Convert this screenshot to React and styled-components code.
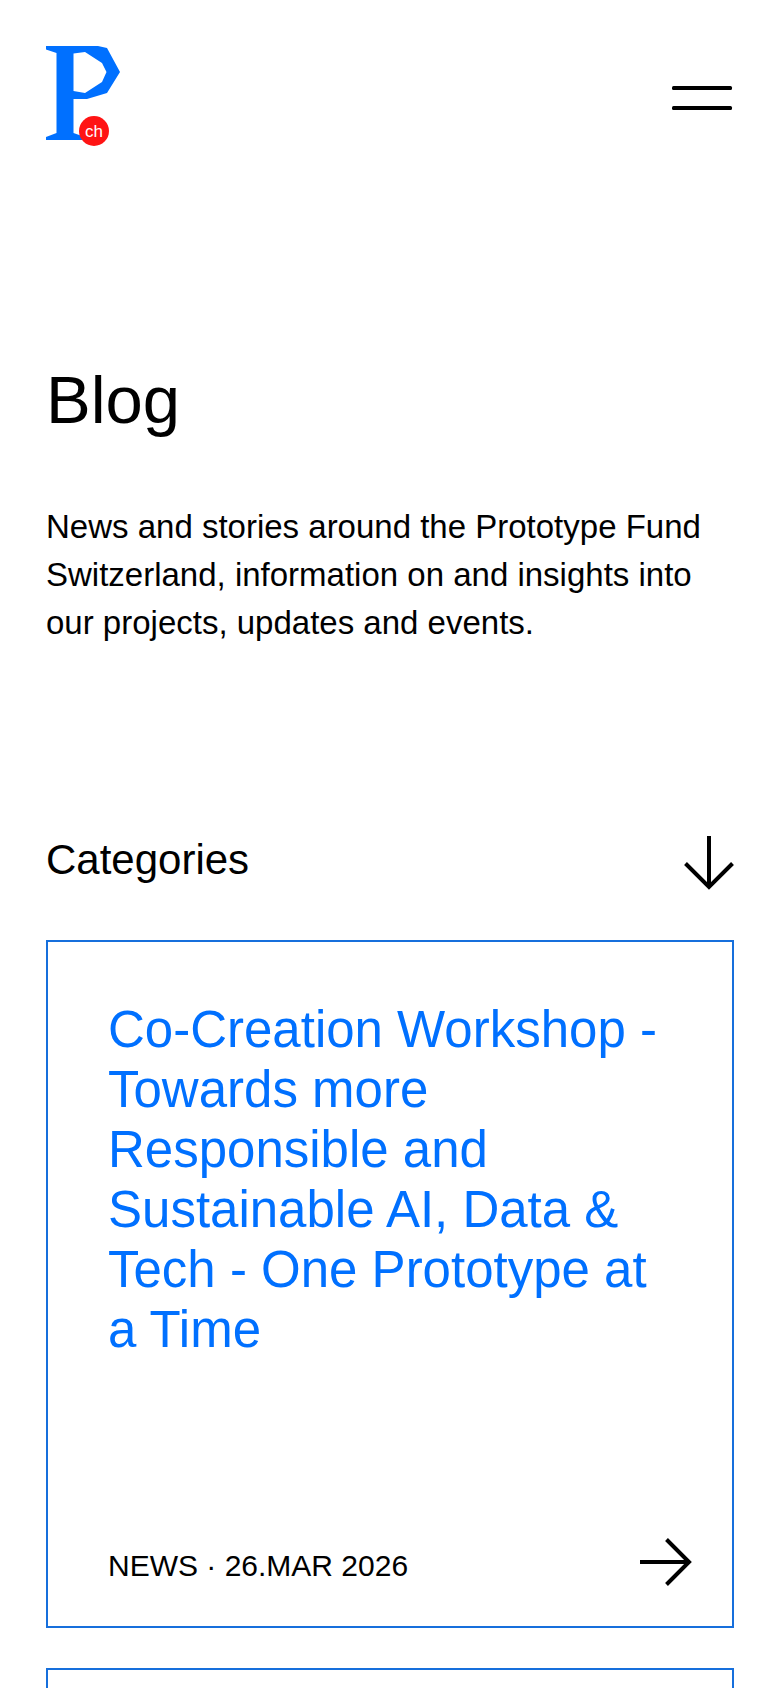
import React from 'react';
import styled, { createGlobalStyle } from 'styled-components';

const posts = [
  {
    title:
      'Co-Creation Workshop - Towards more Responsible and Sustainable AI, Data & Tech - One Prototype at a Time',
    meta: 'NEWS · 26.MAR 2026',
  },
  { title: '', meta: '' },
];

const App = () => {
  return (
    <>
      <GlobalStyle />
      <Page>
        <Header>
          <LogoLink href="/" aria-label="Prototype Fund Switzerland">
            <Logo />
          </LogoLink>
          <MenuButton type="button" aria-label="Menu">
            <svg width="62" height="24" viewBox="0 0 62 24" aria-hidden="true">
              <rect x="0" y="0" width="60" height="4" rx="1.5" />
              <rect x="0" y="20" width="60" height="4" rx="1.5" />
            </svg>
          </MenuButton>
        </Header>
        <main>
          <Title>Blog</Title>
          <Intro>
            News and stories around the Prototype Fund Switzerland, information on and insights
            into our projects, updates and events.
          </Intro>
          <CategoriesButton type="button" aria-expanded="false">
            Categories
            <ArrowDown />
          </CategoriesButton>
          <PostList>
            {posts.map((post, index) => (
              <PostCard key={index} href="/blog">
                <PostTitle>{post.title}</PostTitle>
                <PostFooter>
                  <PostMeta>{post.meta}</PostMeta>
                  <ArrowRight />
                </PostFooter>
              </PostCard>
            ))}
          </PostList>
        </main>
      </Page>
    </>
  );
};

const Logo = () => (
  <svg width="76" height="104" viewBox="0 0 76 104" aria-hidden="true">
    <path
      fill="#0070ff"
      fillRule="evenodd"
      d="M0 0H52L61 2L74 26L61 47L41 53H27.5V87L36 90V94H0V91L10.5 87V7L0 3.5Z
         M27.5 7.5L39 6L56 17L60.5 26L56 36L39 47L27.5 45Z"
    />
    <circle cx="48" cy="85" r="15" fill="#ff1414" />
    <LogoText x="48" y="91" textAnchor="middle">
      ch
    </LogoText>
  </svg>
);

const ArrowDown = () => (
  <svg width="50" height="54" viewBox="0 0 50 54" fill="none" stroke="#000" strokeWidth="4" aria-hidden="true">
    <path d="M25 0V51M1.5 27.5L25 51L48.5 27.5" />
  </svg>
);

const ArrowRight = () => (
  <svg width="52" height="48" viewBox="0 0 52 48" fill="none" stroke="#000" strokeWidth="4" aria-hidden="true">
    <path d="M0 24H49M26.5 1.5L49 24L26.5 46.5" />
  </svg>
);

const GlobalStyle = createGlobalStyle`
  * {
    box-sizing: border-box;
  }

  body {
    margin: 0;
    background: #fff;
    color: #000;
    font-family: 'Liberation Sans', Arial, sans-serif;
    overflow-x: hidden;
  }
`;

const Page = styled.div`
  padding: 46px;
`;

const Header = styled.header`
  display: flex;
  align-items: center;
  justify-content: space-between;
`;

const LogoLink = styled.a`
  display: flex;
`;

const LogoText = styled.text`
  fill: #fff;
  font-size: 17px;
`;

const MenuButton = styled.button`
  display: flex;
  padding: 0;
  border: 0;
  background: none;
  cursor: pointer;
`;

const Title = styled.h1`
  margin: 210px 0 0;
  font-size: 67px;
  line-height: 80px;
  font-weight: 400;
`;

const Intro = styled.p`
  margin: 63px 0 0;
  font-size: 33px;
  line-height: 48px;
`;

const CategoriesButton = styled.button`
  display: flex;
  align-items: flex-start;
  justify-content: space-between;
  width: 100%;
  margin-top: 189px;
  padding: 0;
  border: 0;
  background: none;
  color: inherit;
  font-family: inherit;
  font-size: 42px;
  line-height: 48px;
  cursor: pointer;
`;

const PostList = styled.div`
  display: flex;
  flex-direction: column;
  gap: 40px;
  margin-top: 50px;
`;

const PostCard = styled.a`
  display: flex;
  flex-direction: column;
  justify-content: space-between;
  aspect-ratio: 1;
  padding: 58px 40px 40px 60px;
  border: 2px solid #166fdc;
  color: inherit;
  text-decoration: none;
`;

const PostTitle = styled.h2`
  margin: 0;
  padding-right: 20px;
  color: #0070ff;
  font-size: 51px;
  line-height: 60px;
  font-weight: 400;
`;

const PostFooter = styled.div`
  display: flex;
  align-items: flex-end;
  justify-content: space-between;
`;

const PostMeta = styled.span`
  font-size: 30px;
  line-height: 40px;
`;

export default App;
